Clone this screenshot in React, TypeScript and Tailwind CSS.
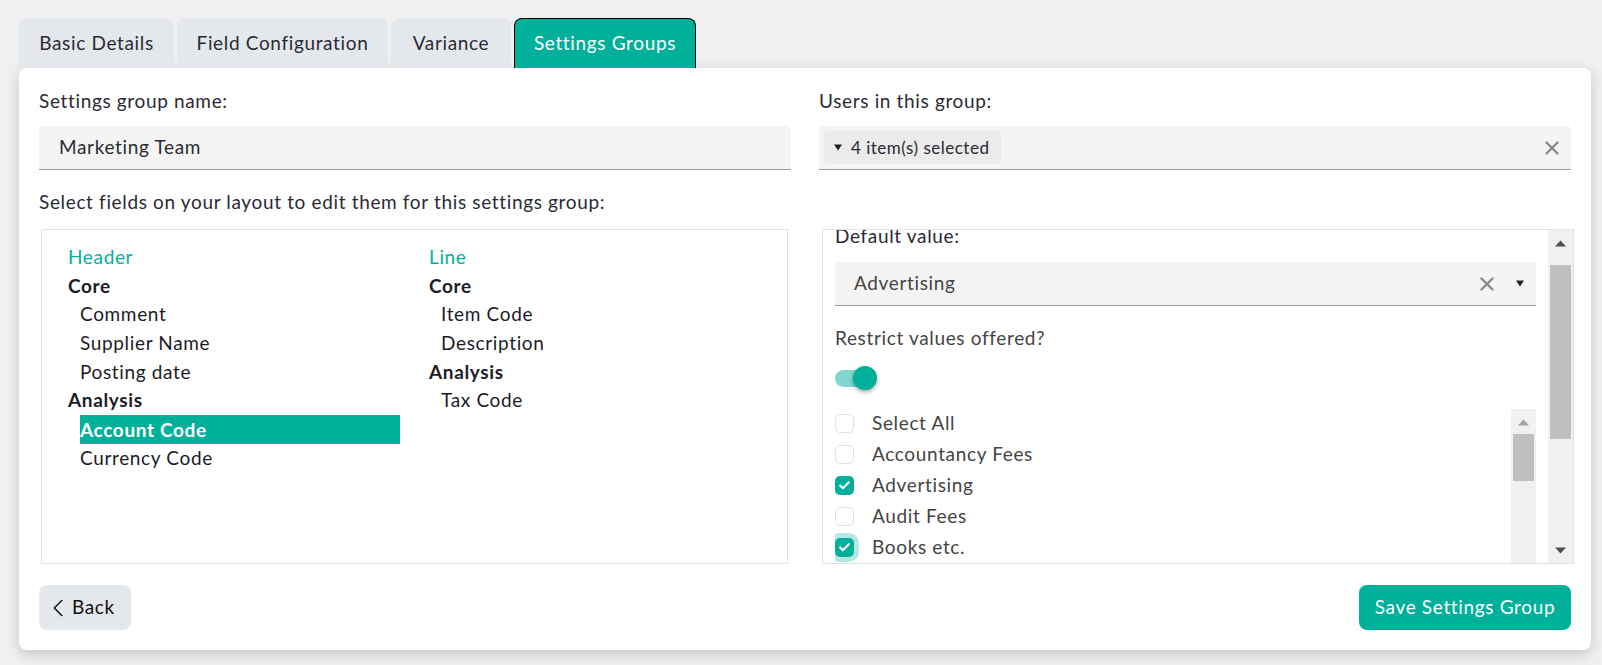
import { Check, ChevronLeft, X } from "lucide-react"

const tabs = [
  { label: "Basic Details", width: "w-[155px]" },
  { label: "Field Configuration", width: "w-[211px]" },
  { label: "Variance", width: "w-[120px]" },
]

const values = [
  { label: "Select All", checked: false },
  { label: "Accountancy Fees", checked: false },
  { label: "Advertising", checked: true },
  { label: "Audit Fees", checked: false },
  { label: "Books etc.", checked: true, focused: true },
]

function Caret({ up = false, className = "" }: { up?: boolean; className?: string }) {
  return (
    <svg width="11" height="7" viewBox="0 0 11 7" preserveAspectRatio="none" className={className} fill="currentColor">
      <path d={up ? "M5.5 0.5 L11 6.5 L0 6.5 Z" : "M0 0.5 L11 0.5 L5.5 6.5 Z"} />
    </svg>
  )
}

function Scrollbar({ thumbTop, thumbHeight, upClass }: { thumbTop: string; thumbHeight: string; upClass: string }) {
  return (
    <div className="relative w-[25px] shrink-0 bg-[#f0f0f0]">
      <Caret up className={`absolute left-[7px] top-[10px] ${upClass}`} />
      <div className={`absolute left-[2px] right-[2px] bg-[#bfbfbf] ${thumbTop} ${thumbHeight}`} />
    </div>
  )
}

function TreeItem({ children, kind }: { children: string; kind: "title" | "group" | "field" }) {
  if (kind === "title") return <div className="h-[28.7px] leading-[28.7px] text-[#00b09b]">{children}</div>
  if (kind === "group") return <div className="h-[28.7px] leading-[28.7px] font-bold text-[#1c1c28]">{children}</div>
  return <div className="h-[28.7px] pl-3 leading-[28.7px]">{children}</div>
}

export default function App() {
  return (
    <div className="h-[665px] w-[1602px] overflow-hidden bg-[#f0f0f0] pl-[19px] pt-[18px] font-['Lato',sans-serif] text-[19px] tracking-[0.65px] text-[#2a2a35]">
      <div className="flex h-[50px] gap-[3px]">
        {tabs.map((tab) => (
          <div key={tab.label} className={`flex items-center justify-center rounded-t-lg bg-[#e4e7ec] ${tab.width}`}>
            {tab.label}
          </div>
        ))}
        <div className="flex w-[182px] items-center justify-center rounded-t-lg border border-b-0 border-black bg-[#00b09b] text-white">
          Settings Groups
        </div>
      </div>

      <div className="w-[1572px] rounded-lg bg-white px-5 pb-5 pt-[19px] shadow-[0_4px_14px_rgba(0,0,0,0.18)]">
        <div className="flex gap-7">
          <div className="w-[752px]">
            <div className="h-[27px] leading-[27px]">Settings group name:</div>
            <div className="mt-3 flex h-11 items-center rounded-t border-b border-[#999] bg-[#f4f4f4] pl-5">
              Marketing Team
            </div>
          </div>
          <div className="w-[752px]">
            <div className="h-[27px] leading-[27px]">Users in this group:</div>
            <div className="mt-3 flex h-11 items-center justify-between rounded-t border-b border-[#999] bg-[#f4f4f4] pl-[5px] pr-[8px]">
              <div className="flex h-[33px] w-[177px] items-center gap-[9px] rounded bg-[#ebebeb] pl-[10px] text-[17px] tracking-[0.5px]">
                <Caret className="h-[7px] w-[8px] text-[#222]" />
                4 item(s) selected
              </div>
              <X size={22} className="text-[#888]" strokeWidth={2.6} />
            </div>
          </div>
        </div>

        <div className="mt-[18px] h-[27px] leading-[27px]">Select fields on your layout to edit them for this settings group:</div>

        <div className="mt-[14px] flex h-[335px]">
          <div className="ml-[2px] flex w-[747px] shrink-0 border border-[#e0e2e8] pl-[26px] pt-[13px] text-[#1c1c28]">
            <div className="w-[361px]">
              <TreeItem kind="title">Header</TreeItem>
              <TreeItem kind="group">Core</TreeItem>
              <TreeItem kind="field">Comment</TreeItem>
              <TreeItem kind="field">Supplier Name</TreeItem>
              <TreeItem kind="field">Posting date</TreeItem>
              <TreeItem kind="group">Analysis</TreeItem>
              <div className="ml-3 h-[29px] w-[320px] bg-[#00b09b] leading-[29px] font-bold text-white">Account Code</div>
              <TreeItem kind="field">Currency Code</TreeItem>
            </div>
            <div>
              <TreeItem kind="title">Line</TreeItem>
              <TreeItem kind="group">Core</TreeItem>
              <TreeItem kind="field">Item Code</TreeItem>
              <TreeItem kind="field">Description</TreeItem>
              <TreeItem kind="group">Analysis</TreeItem>
              <TreeItem kind="field">Tax Code</TreeItem>
            </div>
          </div>

          <div className="ml-[34px] flex w-[752px] shrink-0 overflow-hidden border border-[#e0e2e8]">
            <div className="flex min-w-0 flex-1 flex-col overflow-hidden pl-[12px] pr-3">
              <div className="-mt-[8px] h-[27px] shrink-0 leading-[27px]">Default value:</div>
              <div className="mt-[13px] flex h-11 shrink-0 items-center rounded-t border-b border-[#999] bg-[#f4f4f4] pl-[19px] pr-[12px] text-[#444]">
                <span className="flex-1">Advertising</span>
                <X size={22} className="text-[#888]" strokeWidth={2.6} />
                <Caret className="ml-[18px] h-[7px] w-[8px] text-[#222]" />
              </div>
              <div className="mt-[18px] h-[27px] shrink-0 leading-[27px] text-[#444]">Restrict values offered?</div>
              <div className="relative mt-[15px] h-[24px] w-[42px] shrink-0">
                <div className="absolute left-0 top-[4px] h-[17px] w-[36px] rounded-full bg-[#7fd7cd]" />
                <div className="absolute left-[18px] top-0 h-6 w-6 rounded-full bg-[#00b09b] shadow-[0_2px_4px_rgba(0,0,0,0.35)]" />
              </div>
              <div className="mt-[19px] flex min-h-0 flex-1">
                <div className="min-w-0 flex-1 overflow-hidden pt-[5px] text-[#444]">
                  {values.map((value) => (
                    <div key={value.label} className="flex h-[31px] items-start">
                      <div
                        className={
                          value.checked
                            ? `flex h-[19px] w-[19px] items-center justify-center rounded-[5px] bg-[#00b09b] ${value.focused ? "shadow-[0_0_0_5px_#b5e8e2]" : ""}`
                            : "h-[19px] w-[19px] rounded-[5px] border border-[#dfe1e8] bg-white"
                        }
                      >
                        {value.checked && <Check size={13} strokeWidth={4} className="text-white" />}
                      </div>
                      <span className="ml-[18px] -mt-[5px] leading-[27px]">{value.label}</span>
                    </div>
                  ))}
                </div>
                <Scrollbar thumbTop="top-[25px]" thumbHeight="h-[47px]" upClass="text-[#a3a3a3]" />
              </div>
            </div>
            <div className="relative flex">
              <Scrollbar thumbTop="top-[35px]" thumbHeight="h-[174px]" upClass="text-[#505050]" />
              <Caret className="absolute bottom-[9px] left-[7px] text-[#505050]" />
            </div>
          </div>
        </div>

        <div className="mt-[21px] flex items-center justify-between">
          <button className="flex h-[45px] w-[92px] items-center rounded-lg bg-[#e4e7ec] pl-1 text-[#111]">
            <ChevronLeft size={30} strokeWidth={1.2} />
            <span className="-ml-[1px]">Back</span>
          </button>
          <button className="h-[45px] w-[212px] rounded-lg bg-[#00b09b] text-white">Save Settings Group</button>
        </div>
      </div>
    </div>
  )
}
